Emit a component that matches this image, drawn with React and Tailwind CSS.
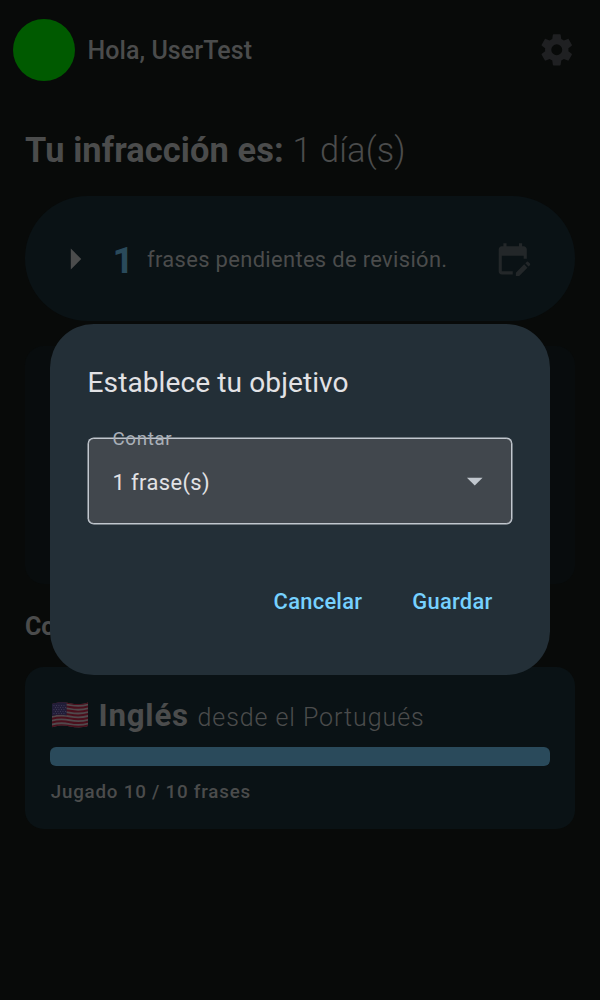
import React from "react";

function GearIcon() {
  return (
    <svg viewBox="0 0 24 24" className="size-[37.5px] fill-[#1f2022]">
      <path d="M12,15.5A3.5,3.5 0 0,1 8.5,12A3.5,3.5 0 0,1 12,8.5A3.5,3.5 0 0,1 15.5,12A3.5,3.5 0 0,1 12,15.5M19.43,12.97C19.47,12.65 19.5,12.33 19.5,12C19.5,11.67 19.47,11.34 19.43,11L21.54,9.37C21.73,9.22 21.78,8.95 21.66,8.73L19.66,5.27C19.54,5.05 19.27,4.96 19.05,5.05L16.56,6.05C16.04,5.66 15.5,5.32 14.87,5.07L14.5,2.42C14.46,2.18 14.25,2 14,2H10C9.75,2 9.54,2.18 9.5,2.42L9.13,5.07C8.5,5.32 7.96,5.66 7.44,6.05L4.95,5.05C4.73,4.96 4.46,5.05 4.34,5.27L2.34,8.73C2.21,8.95 2.27,9.22 2.46,9.37L4.57,11C4.53,11.34 4.5,11.67 4.5,12C4.5,12.33 4.53,12.65 4.57,12.97L2.46,14.63C2.27,14.78 2.21,15.05 2.34,15.27L4.34,18.73C4.46,18.95 4.73,19.03 4.95,18.95L7.44,17.94C7.96,18.34 8.5,18.68 9.13,18.93L9.5,21.58C9.54,21.82 9.75,22 10,22H14C14.25,22 14.46,21.82 14.5,21.58L14.87,18.93C15.5,18.67 16.04,18.34 16.56,17.94L19.05,18.95C19.27,19.03 19.54,18.95 19.66,18.73L21.66,15.27C21.78,15.05 21.73,14.78 21.54,14.63L19.43,12.97Z" />
    </svg>
  );
}

function EditCalendarIcon() {
  return (
    <svg viewBox="0 0 24 24" className="size-[37.5px] fill-[#232729]">
      <path d="M12 22H5a2 2 0 01-2-2L3.01 6c0-1.1.88-2 1.99-2h1V2h2v2h8V2h2v2h1c1.1 0 2 .9 2 2v6h-2v-2H5v10h7v2zm10.13-5.01l.71-.71a.996.996 0 000-1.41l-.71-.71a.996.996 0 00-1.41 0l-.71.71 2.12 2.12zm-.71.71l-5.3 5.3H14v-2.12l5.3-5.3 2.12 2.12z" />
    </svg>
  );
}

const stripes = [1, 4.8, 8.6, 12.4, 16.2, 20, 23.8];

function FlagIcon() {
  return (
    <svg viewBox="0 0 38 26" className="ml-px h-[26px] w-[38px]">
      <defs>
        <clipPath id="flag">
          <path d="M1 2C8 -0.5 13 0 19 1.2S31 2.6 37 .6V24C31 26 25 25.6 19 24.4S8 23.2 1 25.2Z" />
        </clipPath>
      </defs>
      <g clipPath="url(#flag)">
        <path d="M0 0H38V26H0Z" fill="#50494c" />
        {stripes.map((y) => (
          <path
            key={y}
            d={`M0 ${y + 0.9}C8 ${y - 1.6} 13 ${y - 1} 19 ${y + 0.2}S31 ${y + 1.6} 38 ${y - 0.6}`}
            fill="none"
            stroke="#4a0f1c"
            strokeWidth="1.95"
          />
        ))}
        <path d="M0 0H15.6V13.4C10 12.4 6 12.8 0 14.2Z" fill="#211d38" />
        <path
          d="M2.5 3.6H15M4 5.6H15M2.5 7.6H15M4 9.6H15M2.5 11.6H15"
          stroke="#4b4860"
          strokeWidth="0.8"
          strokeDasharray="0.9 1.6"
        />
      </g>
    </svg>
  );
}

function GoalDialog() {
  return (
    <div className="absolute inset-0 flex items-start justify-center pt-[324px]">
      <section className="flex h-[351px] w-[500px] flex-col rounded-[43.75px] bg-[#232f37] px-[37.5px] pt-[39px]">
        <h2 className="text-[28.1px] leading-[39px] tracking-[0.08px] text-[#e2e2e5]">Establece tu objetivo</h2>
        <div className="relative mt-[36px] ml-[0.5px] flex h-[86px] w-[424px] items-center justify-between rounded-[5.75px] border border-[#c1c7ce] bg-[#41474d] pr-[17.5px] pl-[23.5px] shadow-[0_0_0_0.5px_#c1c7ce]">
          <span className="absolute top-[-12px] left-[23.5px] text-[18.75px] leading-[25px] tracking-[0.625px] text-[#a9b0b8]">
            Contar
          </span>
          <span className="pt-[3px] text-[21.9px] leading-[30px] tracking-[0.39px] text-[#e2e2e5]">1 frase(s)</span>
          <svg viewBox="0 0 24 24" className="size-[37.5px] fill-[#c1c7ce]">
            <path d="M7,10L12,15L17,10H7Z" />
          </svg>
        </div>
        <div className="mt-[62px] flex justify-end gap-[50px] pr-[20px] text-[21.9px] leading-[31px] font-medium tracking-[0.27px] text-[#76d1ff]">
          <button>Cancelar</button>
          <button>Guardar</button>
        </div>
      </section>
    </div>
  );
}

export default function App() {
  return (
    <div className="relative h-[1000px] w-[600px] overflow-hidden bg-[#080a09] font-['Roboto',sans-serif] text-[#4b4c4c]">
      <header className="flex h-[100px] items-center pr-[25px] pl-[12.5px]">
        <div className="size-[62.5px] rounded-full bg-[#005a00]" />
        <span className="ml-[12.5px] flex-1 pt-[2px] text-[25px] leading-[38px] font-medium tracking-[0.06px]">
          Hola, UserTest
        </span>
        <GearIcon />
      </header>
      <main className="flex flex-col px-[25px]">
        <h1 className="mt-[28px] text-[34.4px] leading-[44px] font-bold tracking-[0.1px]">
          Tu infracción es: <span className="font-light">1 día(s)</span>
        </h1>
        <section className="mt-[24px] flex h-[125px] items-center rounded-[62.5px] bg-[#0a1215] pr-[43.75px] pl-[25px]">
          <svg viewBox="0 0 24 24" className="size-[50px] fill-[#4b4c4c]">
            <path d="M10,17L15,12L10,7V17Z" />
          </svg>
          <span className="ml-[12.5px] w-[34.5px] pt-[3px] text-[37.5px] leading-[44px] font-bold text-[#2a4a5b]">1</span>
          <span className="flex-1 pt-[2px] text-[21.9px] leading-[31px] tracking-[0.35px]">frases pendientes de revisión.</span>
          <EditCalendarIcon />
        </section>
        <section className="mt-[25px] h-[238px] rounded-[18.75px] bg-[#080c0d]" />
        <h3 className="mt-[24px] text-[25px] leading-[38px] font-bold">Continuar</h3>
        <section className="mt-[21px] flex h-[162px] flex-col rounded-[18.75px] bg-[#0a1215] px-[25px] pt-[26px]">
          <div className="flex h-[44px] items-center">
            <FlagIcon />
            <p className="ml-[9.5px] pt-[3px] text-[31.25px] leading-[44px] font-bold tracking-[0.78px]">
              Inglés <span className="text-[25px] font-light tracking-[0.94px]">desde el Portugués</span>
            </p>
          </div>
          <div className="mt-[10px] h-[19px] rounded-[6px] bg-[#2a4a5b]" />
          <p className="mt-[14px] ml-[0.8px] text-[18.75px] leading-[25px] font-medium tracking-[0.78px]">Jugado 10 / 10 frases</p>
        </section>
      </main>
      <GoalDialog />
    </div>
  );
}
